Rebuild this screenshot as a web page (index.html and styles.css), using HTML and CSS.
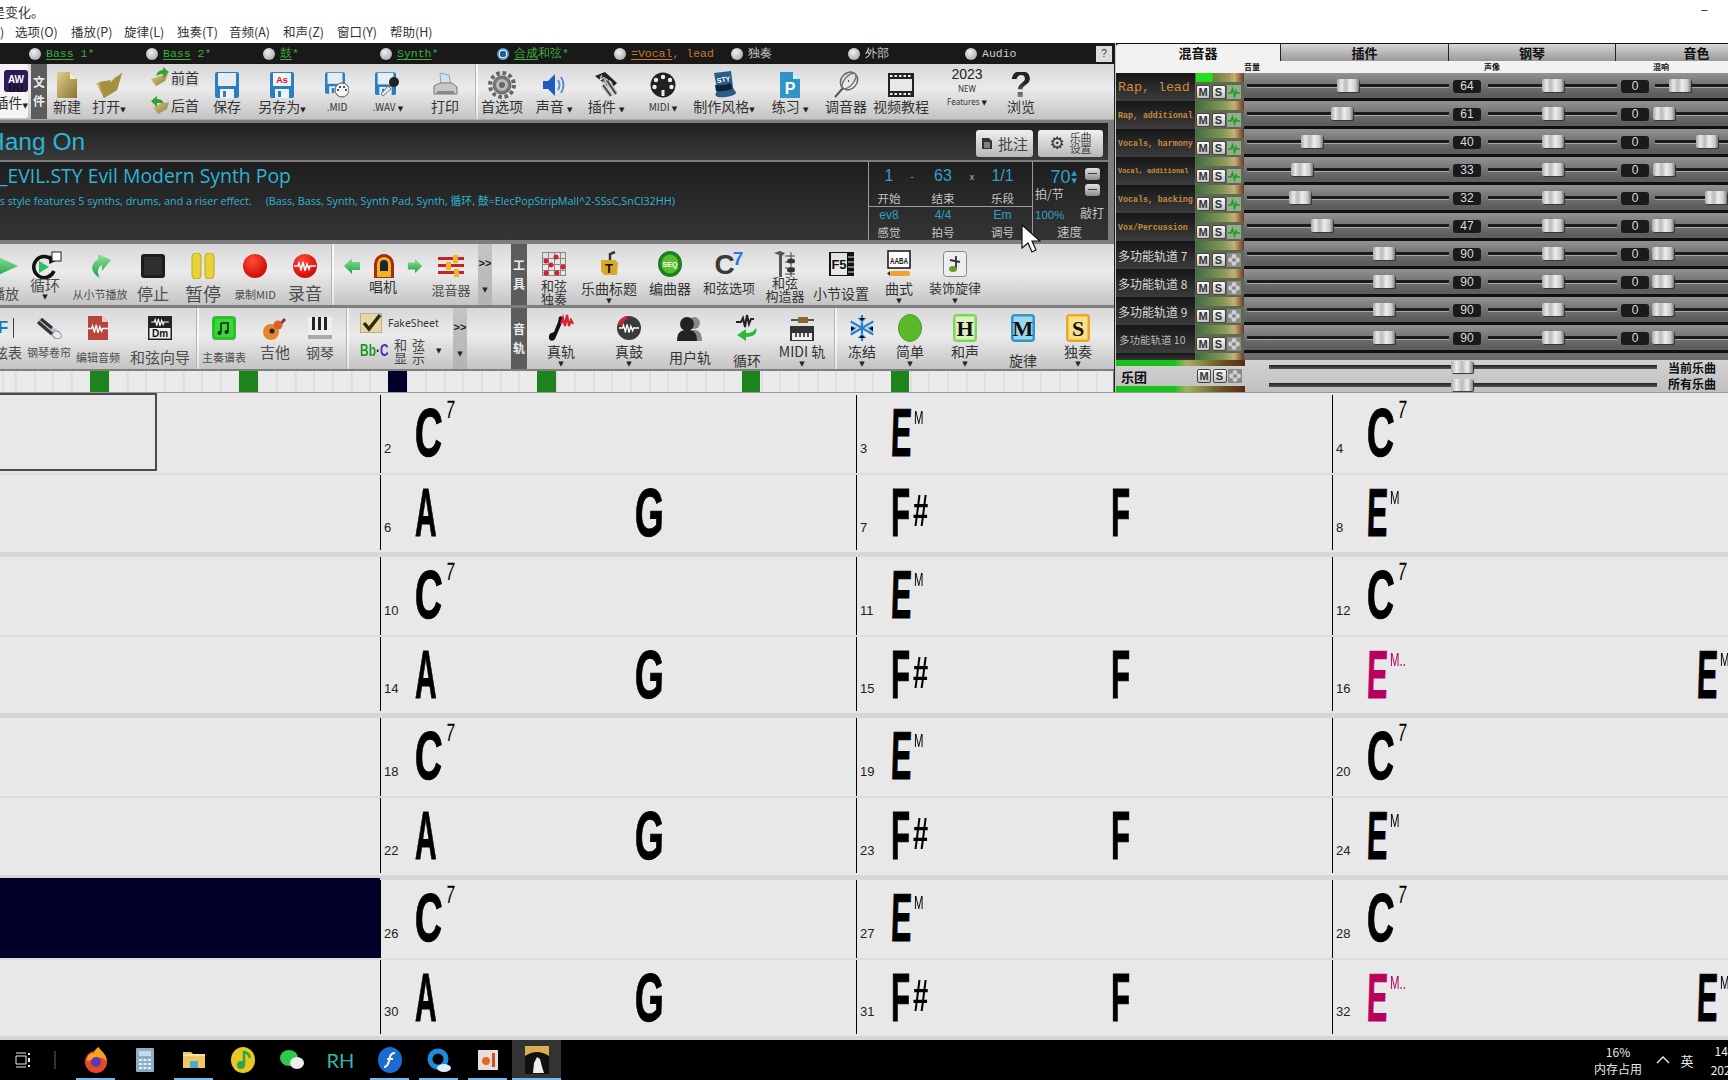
FILE: index.html
```html
<!DOCTYPE html>
<html lang="zh">
<head>
<meta charset="utf-8">
<title>Band-in-a-Box</title>
<link rel="stylesheet" href="styles.css">
</head>
<body>
<svg class="defs" width="0" height="0">
  <defs>
    <linearGradient id="gold" x1="0" y1="0" x2="1" y2="1"><stop offset="0" stop-color="#e2cf8c"/><stop offset="1" stop-color="#8a7430"/></linearGradient>
    <linearGradient id="grn" x1="0" y1="0" x2="0" y2="1"><stop offset="0" stop-color="#8fe39a"/><stop offset="1" stop-color="#1fa04a"/></linearGradient>
    <radialGradient id="red" cx=".4" cy=".3" r=".8"><stop offset="0" stop-color="#ff4a3a"/><stop offset="1" stop-color="#c80000"/></radialGradient>
    <symbol id="fl" viewBox="0 0 24 26"><rect width="24" height="26" rx="2" fill="#2a7fc4"/><rect x="3" y="1" width="18" height="13" fill="#e6ecf0"/><rect x="5" y="17" width="14" height="9" fill="#eef2f6"/><rect x="8" y="19" width="3" height="6" fill="#2a7fc4"/></symbol>
    <symbol id="gf" viewBox="0 0 14 14"><rect width="14" height="14" fill="#8a8a8a"/><g fill="#cfcfcf"><circle cx="7" cy="3.5" r="2.4"/><circle cx="7" cy="10.5" r="2.4"/><circle cx="3.5" cy="7" r="2.4"/><circle cx="10.5" cy="7" r="2.4"/></g><circle cx="7" cy="7" r="1.6" fill="#777"/></symbol>
    <symbol id="gw" viewBox="0 0 14 14"><rect width="14" height="14" fill="#9aa88e"/><path d="M1 8h3l1.5-4 2 7 1.5-5 1 2h3" fill="none" stroke="#18a028" stroke-width="1.6"/></symbol>
    <symbol id="rw" viewBox="0 0 24 10"><path d="M1 5h4l1-3 2 7 2-8 2 9 2-7 2 5 1-3h6" fill="none" stroke="#fff" stroke-width="1.5"/></symbol>
  </defs>
</svg>

<div class="app">
  <header class="top">
    <div class="note">是变化。</div>
    <div class="wctl">–</div>
    <nav class="menu"><span>)</span><span>选项(O)</span><span>播放(P)</span><span>旋律(L)</span><span>独奏(T)</span><span>音频(A)</span><span>和声(Z)</span><span>窗口(Y)</span><span>帮助(H)</span></nav>
  </header>

  <div class="work">
    <section class="left">
      <div class="tracks">
        <label class="trk grn"><i class="radio"></i><span><u>Bass</u> 1*</span></label>
        <label class="trk grn"><i class="radio"></i><span><u>Bass</u> 2*</span></label>
        <label class="trk grn"><i class="radio"></i><span><u>鼓</u>*</span></label>
        <label class="trk grn"><i class="radio"></i><span><u>Synth</u>*</span></label>
        <label class="trk grn"><i class="radio sel"></i><span><u>合成</u>和弦*</span></label>
        <label class="trk org"><i class="radio"></i><span><u>=Vocal</u>, lead</span></label>
        <label class="trk wht"><i class="radio"></i><span>独奏</span></label>
        <label class="trk wht"><i class="radio"></i><span>外部</span></label>
        <label class="trk wht"><i class="radio"></i><span>Audio</span></label>
        <button class="help">?</button>
      </div>

      <div class="bar t1">
        <div class="plug"><svg width="26" height="22" viewBox="0 0 26 22"><rect x="2" width="24" height="22" rx="3" fill="#2c1a58"/><text x="14" y="13" class="svgt w" font-size="10">AW</text><text x="14" y="22" class="svgt k" font-size="10">UU</text></svg><div class="lb f14">插件<em>▼</em></div></div>
        <span></span>
        <div class="vtab">文件</div>
        <div class="tool"><div class="ia"><svg width="22" height="28" viewBox="0 0 22 28"><path d="M1 1h13l7 7v19H1z" fill="url(#gold)"/><path d="M14 1v7h7z" fill="#f3ecd0"/></svg></div><div class="lb f14">新建</div></div>
        <div class="tool"><div class="ia"><svg width="28" height="28" viewBox="0 0 28 28"><path d="M1 12l8 15 13-8 5-17-8 5-3 4z" fill="url(#gold)"/><path d="M9 27L4 11l12-2-1 3 12-10-5 17z" fill="#a58f42"/></svg></div><div class="lb f14">打开<em>▼</em></div></div>
        <span></span>
        <div class="tool first">
          <div class="fi on"><svg width="20" height="20" viewBox="0 0 20 20"><path d="M1 12l5 7 9-5 3-7-8 2z" fill="url(#gold)"/><path d="M6 9c1-4 4-6 7-6V0l6 5-6 6V7c-3 0-5 1-7 2z" fill="#2fa52f"/></svg><span class="f14">前首</span></div>
          <div class="fi"><svg width="20" height="20" viewBox="0 0 20 20"><path d="M3 12l5 7 9-5 2-7-9 2z" fill="url(#gold)"/><path d="M14 9c-1-4-4-5-7-5V1L1 6l6 6V8c3 0 5 0 7 1z" fill="#2fa52f"/></svg><span class="f14">后首</span></div>
        </div>
        <div class="tool"><div class="ia"><svg width="24" height="26"><use href="#fl"/></svg></div><div class="lb f14">保存</div></div>
        <div class="tool"><div class="ia"><svg width="24" height="26" viewBox="0 0 24 26"><use href="#fl" width="24" height="26"/><rect x="3" y="1" width="18" height="13" fill="#f2f2f2"/><text x="12" y="11" class="svgt" font-size="9" fill="#c8102e">As</text></svg></div><div class="lb f14">另存为<em>▼</em></div></div>
        <div class="tool"><div class="ia"><svg width="24" height="26" viewBox="0 0 24 26"><use href="#fl" width="20" height="22"/><circle cx="17" cy="18" r="7" fill="#f4f4f4" stroke="#555"/><g fill="#222"><circle cx="13" cy="18" r="1"/><circle cx="15" cy="15" r="1"/><circle cx="19" cy="15" r="1"/><circle cx="21" cy="18" r="1"/></g></svg></div><div class="lb f10 up">.MID</div></div>
        <div class="tool"><div class="ia"><svg width="26" height="26" viewBox="0 0 26 26"><use href="#fl" width="21" height="23"/><path d="M6 22l7-8 3 3-8 7z" fill="#e8e8e8" stroke="#777"/><circle cx="19" cy="10" r="5" fill="#222"/></svg></div><div class="lb f10 up">.WAV <em>▼</em></div></div>
        <div class="tool"><div class="ia"><svg width="26" height="26" viewBox="0 0 26 26"><path d="M8 1l9 2 2 10H9z" fill="#cfe0ee" stroke="#8aa"/><path d="M2 14l6-3h12l5 4v7H2z" fill="#c8c8c8" stroke="#777"/><rect x="5" y="19" width="17" height="3" fill="#888"/></svg></div><div class="lb f14">打印</div></div>
        <span></span>
        <div class="sep"></div>
        <div class="tool"><div class="ia"><svg width="28" height="28" viewBox="0 0 28 28"><circle cx="14" cy="14" r="9" fill="#777" stroke="#666" stroke-width="1"/><circle cx="14" cy="14" r="12" fill="none" stroke="#666" stroke-width="4" stroke-dasharray="3.6 2.7"/><circle cx="14" cy="14" r="6" fill="#bbb"/><circle cx="14" cy="14" r="3" fill="#666"/></svg></div><div class="lb f14">首选项</div></div>
        <div class="tool"><div class="ia"><svg width="24" height="24" viewBox="0 0 24 24"><path d="M1 8h5l7-7v22l-7-7H1z" fill="#1d5fc0"/><path d="M16 7q3 5 0 10M19 4q5 8 0 16" fill="none" stroke="#5a8ed8" stroke-width="2"/></svg></div><div class="lb f14">声音 <em>▼</em></div></div>
        <div class="tool"><div class="ia"><svg width="26" height="28" viewBox="0 0 26 28"><path d="M2 5L12 1l12 11-6 6z" fill="#222"/><text x="12" y="12" class="svgt w" font-size="7" transform="rotate(35 12 10)">VST</text><path d="M10 14l8 11M15 11l8 12" stroke="#ccc" stroke-width="5"/><path d="M10 14l8 11M15 11l8 12" stroke="#444" stroke-width="2"/></svg></div><div class="lb f14">插件 <em>▼</em></div></div>
        <div class="tool"><div class="ia"><svg width="26" height="26" viewBox="0 0 26 26"><circle cx="13" cy="13" r="12.5" fill="#222"/><g fill="#eee"><circle cx="13" cy="5" r="2.2"/><circle cx="6" cy="8" r="2.2"/><circle cx="20" cy="8" r="2.2"/><circle cx="4.5" cy="15" r="2.2"/><circle cx="21.5" cy="15" r="2.2"/><rect x="11.5" y="18" width="3" height="6"/></g></svg></div><div class="lb f10 up">MIDI <em>▼</em></div></div>
        <div class="tool"><div class="ia"><svg width="26" height="28" viewBox="0 0 26 28"><path d="M3 2l17-2 2 16c1 4 3 4 3 6 0 3-17 6-20 3-2-2 1-3 1-7z" fill="#2a5c88"/><path d="M4 14q9 1 16-2l1 6q-8 3-16 2z" fill="#123"/><text x="13" y="11" class="svgt w" font-size="7" transform="rotate(-10 13 11)">STY</text></svg></div><div class="lb f14">制作风格<em>▼</em></div></div>
        <div class="tool"><div class="ia"><svg width="22" height="28" viewBox="0 0 22 28"><path d="M1 1h13l7 7v19H1z" fill="#2f95c8"/><path d="M14 1v7h7z" fill="#d8eef8"/><text x="11" y="23" class="svgt w" font-size="16">P</text></svg></div><div class="lb f14">练习 <em>▼</em></div></div>
        <div class="tool"><div class="ia"><svg width="26" height="28" viewBox="0 0 26 28"><ellipse cx="16" cy="10" rx="8" ry="9.500" fill="none" stroke="#666" stroke-width="1.500" transform="rotate(40 16 10)"/><ellipse cx="16" cy="10" rx="4.500" ry="9.500" fill="none" stroke="#777" stroke-width="1.500" transform="rotate(40 16 10)"/><path d="M16 10l-1 0M10 17L2 26" stroke="#555" stroke-width="2"/></svg></div><div class="lb f14">调音器</div></div>
        <div class="tool"><div class="ia"><svg width="26" height="24" viewBox="0 0 26 24"><rect width="26" height="24" fill="#222"/><rect x="2" y="6" width="22" height="12" fill="#e8e8e8"/><path d="M2 3h22M2 21h22" stroke="#eee" stroke-width="2" stroke-dasharray="2.5 2"/></svg></div><div class="lb f14">视频教程</div></div>
        <div class="tool feat"><div class="y23">2023</div><div class="y3">NEW</div><div class="y3">Features <em>▼</em></div></div>
        <div class="tool"><div class="ia qm">?</div><div class="lb f14">浏览</div></div>
      </div>

      <div class="title">
        <div class="song">Hang On</div>
        <div class="btns">
          <button class="pill"><svg width="12" height="13" viewBox="0 0 12 13"><path d="M1 1h7l3 3v8H1z" fill="#333"/><path d="M3 6h6M3 8h6M3 10h6" stroke="#ccc"/></svg><span>批注</span></button>
          <button class="pill wide"><span class="gear">⚙</span><span class="two">乐曲<br>设置</span></button>
        </div>
      </div>

      <div class="style">
        <div class="stxt">
          <div class="sname">_EVIL.STY Evil Modern Synth Pop</div>
          <div class="sdesc">is style features 5 synths, drums, and a riser effect.&nbsp;&nbsp;&nbsp;&nbsp;&nbsp;(Bass, Bass, Synth, Synth Pad, Synth, 循环, 鼓=ElecPopStripMall^2-SSsC,SnCl32HH)</div>
        </div>
        <div class="form">
          <div class="fr top1">
            <b class="v">1</b><small>-</small><b class="v">63</b><small>x</small><b class="v">1/1</b>
            <span>开始</span><i></i><span>结束</span><i></i><span>乐段</span>
          </div>
          <div class="fr bot1">
            <b class="v s">ev8</b><i></i><b class="v s">4/4</b><i></i><b class="v s">Em</b>
            <span>感觉</span><i></i><span>拍号</span><i></i><span>调号</span>
          </div>
        </div>
        <div class="tempo">
          <div class="tleft">
            <div class="tnum"><b class="v">70</b><span class="arr">▲<br>▼</span></div>
            <span class="tl">拍/节</span>
            <b class="v s p">100%</b>
          </div>
          <div class="tright"><em class="mini"></em><em class="mini"></em><span class="tl">敲打</span></div>
          <span class="tspd">速度</span>
        </div>
      </div>

      <div class="bar t2a">
        <div class="tool"><div class="ia"><svg width="30" height="26" viewBox="0 0 30 26"><path d="M2 1l26 12L2 25z" fill="url(#grn)"/></svg></div><div class="lb f14 dim">播放</div></div>
        <div class="tool dn"><div class="ia"><svg class="lp" width="34" height="30" viewBox="0 0 34 30"><path d="M24 9a10.5 10.5 0 1 0 2 11" fill="none" stroke="#111" stroke-width="3.5"/><path d="M22 4l-1 9 7-3z" fill="#111"/><path d="M11 10l10 6-10 6z" fill="#2fbf5f"/><rect x="24" y="1" width="9" height="9" fill="#fff" stroke="#222"/></svg></div><div class="lb f15 dim">循环</div><em>▼</em></div>
        <div class="tool"><div class="ia"><svg width="24" height="26" viewBox="0 0 24 26"><path d="M12 25C3 20 1 12 10 6V1l13 6-9 11v-6c-5 3-5 8-2 13z" fill="url(#grn)"/></svg></div><div class="lb f11 dim">从小节播放</div></div>
        <div class="tool"><div class="ia"><svg width="24" height="24"><rect width="24" height="24" rx="3" fill="#1c1c1c"/><rect x="3" y="3" width="18" height="18" fill="#2f2f2f"/></svg></div><div class="lb f16 dim">停止</div></div>
        <div class="tool"><div class="ia"><svg width="24" height="26"><rect x="1" width="9" height="26" rx="4" fill="#e8d23c" stroke="#c0a818"/><rect x="14" width="9" height="26" rx="4" fill="#e8d23c" stroke="#c0a818"/></svg></div><div class="lb f18 dim">暂停</div></div>
        <div class="tool"><div class="ia"><svg width="24" height="24"><circle cx="12" cy="12" r="12" fill="url(#red)"/></svg></div><div class="lb f11 dim">录制MID</div></div>
        <div class="tool"><div class="ia"><svg width="24" height="24" viewBox="0 0 24 24"><circle cx="12" cy="12" r="12" fill="url(#red)"/><use href="#rw" x="0" y="7" width="24" height="10"/></svg></div><div class="lb f17 dim">录音</div></div>
        <div class="sep"></div>
        <div class="tool juke">
          <div class="ia gp">
            <svg width="18" height="18" viewBox="0 0 18 18"><path d="M1 9l8-8v4h8v8H9v4z" fill="url(#grn)"/></svg>
            <svg width="22" height="26" viewBox="0 0 22 26"><path d="M1 25V11a10 10 0 0 1 20 0v14z" fill="#a82a14"/><path d="M4 24V11a7 7 0 0 1 14 0v13z" fill="#e8b828"/><path d="M7 18V11a4 4 0 0 1 8 0v7z" fill="#223"/></svg>
            <svg width="16" height="16" viewBox="0 0 18 18"><path d="M17 9L9 1v4H1v8h8v4z" fill="url(#grn)"/></svg>
          </div>
          <div class="lb f14 up4">唱机</div>
        </div>
        <div class="tool"><div class="ia"><svg width="26" height="22" viewBox="0 0 26 22"><rect y="2" width="26" height="3" fill="#c8202a"/><rect y="9" width="26" height="3" fill="#c8202a"/><rect y="16" width="26" height="3" fill="#c8202a"/><rect x="15" width="5" height="8" fill="#e8b828"/><rect x="8" y="7" width="5" height="8" fill="#e8b828"/><rect x="16" y="14" width="5" height="8" fill="#e8b828"/></svg></div><div class="lb f13 dim mx">混音器</div></div>
        <span></span>
        <div class="more"><span>&gt;&gt;</span><em>▼</em></div>
        <span></span><span></span>
        <div class="vtab">工具</div>
        <div class="tool"><div class="ia sm"><svg width="24" height="24" viewBox="0 0 24 24"><path d="M0 .5h24M0 6.500h24M0 12.500h24M0 18.500h24M0 23.500h24M.5 0v24M6.500 0v24M12.500 0v24M18.500 0v24M23.500 0v24" stroke="#888"/><g fill="#d02030"><circle cx="14" cy="5" r="2.500"/><circle cx="4" cy="9" r="2.500"/><circle cx="9" cy="13" r="2.500"/><circle cx="21" cy="15" r="2.500"/><circle cx="4" cy="21" r="2.500"/><circle cx="15" cy="21" r="2.500"/></g></svg></div><div class="lb f13 two">和弦<br>独奏</div></div>
        <div class="tool dn"><div class="ia sm"><svg width="20" height="26" viewBox="0 0 20 26"><path d="M2 9h14l3 3-1 12H5l-3-4z" fill="#d8a828"/><text x="10" y="22" class="svgt k" font-size="13">T</text><path d="M11 9V3l5-2" stroke="#333" stroke-width="2.500" fill="none"/></svg></div><div class="lb f14">乐曲标题</div><em>▼</em></div>
        <div class="tool"><div class="ia sm"><svg width="24" height="26" viewBox="0 0 24 26"><ellipse cx="12" cy="13" rx="12" ry="13" fill="#1d7f1d"/><ellipse cx="12" cy="13" rx="8.500" ry="9.500" fill="#58c030"/><text x="12" y="16" class="svgt w" font-size="7">SEQ</text></svg></div><div class="lb f14">编曲器</div></div>
        <div class="tool"><div class="ia sm c7"><b>C</b><sup>7</sup></div><div class="lb f13">和弦选项</div></div>
        <div class="tool"><div class="ia sm"><svg width="24" height="28" viewBox="0 0 24 28"><path d="M1 3l6-2 5 2-3 3v21H6V5z" fill="#555"/><path d="M12 6h10M12 12h10M12 18h10M12 24h10M18 2v25" stroke="#444"/><ellipse cx="18" cy="11" rx="4" ry="2.500" fill="#333"/><ellipse cx="18" cy="20" rx="4" ry="2.500" fill="#333"/></svg></div><div class="lb f13 two shift">和弦<br>构造器</div></div>
        <div class="tool"><div class="ia sm"><svg width="26" height="24" viewBox="0 0 26 24"><rect x="2" width="18" height="24" fill="none" stroke="#111" stroke-width="2"/><rect x="20" width="6" height="24" fill="#111"/><text x="11" y="17" class="svgt k" font-size="13">F5</text><path d="M20 5h6M20 10h6M20 15h6M20 20h6" stroke="#ddd"/></svg></div><div class="lb f14 low2">小节设置</div></div>
        <div class="tool dn"><div class="ia sm"><svg width="24" height="28" viewBox="0 0 24 28"><rect x="1" y="1" width="22" height="17" fill="#fff" stroke="#111" stroke-width="1.500"/><text x="12" y="14" class="svgt k" font-size="9" textLength="18" lengthAdjust="spacingAndGlyphs">AABA</text><rect x="3" y="21" width="20" height="5" rx="2" fill="#f0a030"/><path d="M3 21l-3 2.500 3 2.500z" fill="#333"/></svg></div><div class="lb f14">曲式</div><em>▼</em></div>
        <div class="tool dn"><div class="ia sm"><svg width="24" height="26" viewBox="0 0 24 26"><rect x=".5" y=".5" width="23" height="25" rx="3" fill="#eee" stroke="#888"/><path d="M13 5v13" stroke="#444" stroke-width="2"/><ellipse cx="10" cy="18" rx="4" ry="3" fill="#6a9a30"/><path d="M7 9l10 2" stroke="#333" stroke-width="2"/></svg></div><div class="lb f13">装饰旋律</div><em>▼</em></div>
      </div>

      <div class="bar t2b">
        <div class="tool"><div class="ia"><span class="fic">F</span></div><div class="lb f14 dim">弦表</div></div>
        <div class="tool"><div class="ia"><svg width="26" height="24" viewBox="0 0 26 24"><path d="M4 2l20 14-5 7L1 8z" fill="#b8c0c8"/><ellipse cx="21" cy="19" rx="3.500" ry="4.500" fill="#e8eef2" stroke="#889" transform="rotate(-55 21 19)"/><path d="M2 6l14 12M5 3l11 9" stroke="#333" stroke-width="3"/></svg></div><div class="lb f11 dim">钢琴卷帘</div></div>
        <div class="tool"><div class="ia"><svg width="22" height="26" viewBox="0 0 22 26"><path d="M1 1h14l6 6v18H1z" fill="#b8453c"/><path d="M15 1v6h6z" fill="#ecc"/><use href="#rw" x="0" y="9" width="22" height="9"/></svg></div><div class="lb f11 dim low">编辑音频</div></div>
        <div class="tool"><div class="ia"><svg width="24" height="24" viewBox="0 0 24 24"><rect width="24" height="24" fill="#222"/><rect x="1.500" y="12" width="21" height="10.500" fill="#eee"/><use href="#rw" x="1" y="2" width="22" height="8"/><text x="12" y="21" class="svgt k" font-size="10">Dm</text></svg></div><div class="lb f15 dim low">和弦向导</div></div>
        <span></span>
        <div class="sep"></div>
        <div class="tool"><div class="ia"><svg width="24" height="24"><rect width="24" height="24" rx="4" fill="#2cc02c"/><rect x="3" y="3" width="18" height="18" rx="2" fill="#38d838"/><path d="M9 7h7v9M9 7v9" stroke="#222" stroke-width="1.600" fill="none"/><circle cx="7.500" cy="17" r="2" fill="#222"/><circle cx="14.500" cy="16" r="2" fill="#222"/></svg></div><div class="lb f11 dim low">主奏谱表</div></div>
        <div class="tool"><div class="ia"><svg width="26" height="26" viewBox="0 0 26 26"><path d="M14 12l8-9 2 2-8 9z" fill="#8a2a4a"/><circle cx="9" cy="17" r="8" fill="#e8842a"/><circle cx="16" cy="10" r="4.500" fill="#d8642a"/><circle cx="10" cy="16" r="2.500" fill="#222"/></svg></div><div class="lb f15 dim">吉他</div></div>
        <div class="tool"><div class="ia"><svg width="24" height="22" viewBox="0 0 24 22"><rect width="24" height="22" fill="#eee"/><rect x="4" width="3" height="13" fill="#222"/><rect x="10" width="3" height="13" fill="#222"/><rect x="16" width="3" height="13" fill="#222"/><rect y="18" width="24" height="4" fill="#aaa"/></svg></div><div class="lb f14 dim">钢琴</div></div>
        <span></span>
        <div class="sep"></div>
        <div class="fake">
          <div class="frow"><svg width="22" height="20" viewBox="0 0 22 20"><rect width="22" height="20" fill="#e6d8a0" stroke="#888"/><path d="M4 10l5 6L20 2" stroke="#2a2a10" stroke-width="3.500" fill="none"/></svg><span>FakeSheet</span></div>
          <div class="frow r2"><span class="bbc"><b>Bb</b><i>·</i><u>C</u></span><span class="chdisp">和 弦<br>显 示</span><em>▼</em></div>
        </div>
        <span></span>
        <div class="more"><span>&gt;&gt;</span><em>▼</em></div>
        <span></span><span></span>
        <div class="vtab">音轨</div>
        <div class="tool dn2"><div class="ia"><svg width="26" height="28" viewBox="0 0 26 28"><path d="M11 3c5-3 4 3 2 8l-6 14c-2 3-7 2-6-3 1-4 4-3 5-4l4-10z" fill="#111"/><path d="M13 10l2-6 2 8 2-11 2 11 2-6 2 4" fill="none" stroke="#d82030" stroke-width="2.200"/></svg></div><div class="lb f14">真轨</div><em>▼</em></div>
        <div class="tool dn2"><div class="ia"><svg width="26" height="26" viewBox="0 0 26 26"><circle cx="13" cy="13" r="12" fill="#3a3a3a"/><path d="M2 9a12 12 0 0 1 8-8l2 3a9 9 0 0 0-6 7z" fill="#d82030"/><use href="#rw" x="2" y="8" width="22" height="10"/></svg></div><div class="lb f14">真鼓</div><em>▼</em></div>
        <div class="tool"><div class="ia"><svg width="26" height="26" viewBox="0 0 26 26"><circle cx="17" cy="8" r="6" fill="#888"/><path d="M10 26c0-9 3-11 7-11s8 2 8 11z" fill="#888"/><circle cx="10" cy="9" r="7" fill="#222"/><path d="M0 26c0-9 4-11 10-11s10 2 10 11z" fill="#222"/></svg></div><div class="lb f14 low">用户轨</div></div>
        <div class="tool"><div class="ia"><svg width="26" height="28" viewBox="0 0 26 28"><path d="M2 8h5l2-4 2 9 2-12 2 9 2-5h3" fill="none" stroke="#222" stroke-width="2"/><path d="M22 14c2 5-2 9-10 9v4l-9-6 9-6v4c5 0 8-2 10-5z" fill="#2fb83f"/></svg></div><div class="lb f14 low2">循环</div></div>
        <div class="tool dn2"><div class="ia"><svg width="26" height="26" viewBox="0 0 26 26"><path d="M2 5h10M18 5h7" stroke="#555" stroke-width="2"/><rect x="9" y="2" width="10" height="6" fill="#8a6a2a"/><rect x="1" y="11" width="24" height="15" fill="#333"/><path d="M3 25V18h20v7" fill="#eee"/><path d="M7 18v4M11 18v4M15 18v4M19 18v4" stroke="#222" stroke-width="1.500"/></svg></div><div class="lb f14">MIDI 轨</div><em>▼</em></div>
        <span></span>
        <div class="sep"></div>
        <div class="tool dn2"><div class="ia"><svg width="26" height="26" viewBox="0 0 26 26"><g stroke="#2a80d0" stroke-width="2.200"><path d="M13 0v26M1.700 6.500l22.600 13M1.700 19.500l22.600-13"/></g><g stroke="#60a8e8" stroke-width="1.200"><path d="M9 3l4 4 4-4M9 23l4-4 4 4M2 11l5 2-5 4M24 11l-5 2 5 4"/></g></svg></div><div class="lb f14">冻结</div><em>▼</em></div>
        <div class="tool dn2"><div class="ia"><svg width="24" height="28"><ellipse cx="12" cy="14" rx="11.500" ry="13.500" fill="#5ab82a" stroke="#4a9a20"/></svg></div><div class="lb f14">简单</div><em>▼</em></div>
        <div class="tool dn2"><div class="ia"><svg class="lt" width="24" height="28" viewBox="0 0 24 28"><rect width="24" height="28" rx="4" fill="#7ad858"/><rect x="2.500" y="2.500" width="19" height="23" fill="#dff0c0"/><text x="12" y="22" class="svgt k serif" font-size="22">H</text></svg></div><div class="lb f14">和声</div><em>▼</em></div>
        <div class="tool"><div class="ia"><svg class="lt" width="24" height="28" viewBox="0 0 24 28"><rect width="24" height="28" rx="4" fill="#2a98c8"/><rect x="2.500" y="2.500" width="19" height="23" fill="#9ad8ee"/><text x="12" y="22" class="svgt k serif" font-size="22">M</text></svg></div><div class="lb f14 low2">旋律</div></div>
        <div class="tool dn2"><div class="ia"><svg class="lt" width="24" height="28" viewBox="0 0 24 28"><rect width="24" height="28" rx="4" fill="#e8a828"/><rect x="2.500" y="2.500" width="19" height="23" fill="#f8e088"/><text x="12" y="22" class="svgt k serif" font-size="22">S</text></svg></div><div class="lb f14">独奏</div><em>▼</em></div>
      </div>

      <div class="ruler">
        <i class="mk m1"></i><i class="mk m2"></i><i class="mk nv m3"></i><i class="mk m4"></i><i class="mk m5"></i><i class="mk m6"></i>
      </div>
    </section>

    <aside class="mixer">
      <div class="tabs"><div class="tab on">混音器</div><div class="tab">插件</div><div class="tab">钢琴</div><div class="tab">音色</div></div>
      <div class="mhead"><span>音量</span><span>声像</span><span>混响</span></div>

      <div class="mrow"><div class="nm o lg">Rap, lead</div><div class="ctl"><i class="meter hot"></i><div class="ms"><b>M</b><b>S</b><svg width="14" height="14"><use href="#gw"/></svg></div></div><div class="tk"><s style="left:50%"></s></div><div class="val">64</div><div class="tk"><s style="left:50%"></s></div><div class="val">0</div><div class="tk r"><s style="left:19%"></s></div></div>
      <div class="mrow"><div class="nm o">Rap, additional</div><div class="ctl"><i class="meter"></i><div class="ms"><b>M</b><b>S</b><svg width="14" height="14"><use href="#gw"/></svg></div></div><div class="tk"><s style="left:47%"></s></div><div class="val">61</div><div class="tk"><s style="left:50%"></s></div><div class="val">0</div><div class="tk r"><s style="left:7%"></s></div></div>
      <div class="mrow"><div class="nm o">Vocals, harmony</div><div class="ctl"><i class="meter"></i><div class="ms"><b>M</b><b>S</b><svg width="14" height="14"><use href="#gw"/></svg></div></div><div class="tk"><s style="left:32%"></s></div><div class="val">40</div><div class="tk"><s style="left:50%"></s></div><div class="val">0</div><div class="tk r"><s style="left:39%"></s></div></div>
      <div class="mrow"><div class="nm o xs">Vocal, additional</div><div class="ctl"><i class="meter"></i><div class="ms"><b>M</b><b>S</b><svg width="14" height="14"><use href="#gw"/></svg></div></div><div class="tk"><s style="left:27%"></s></div><div class="val">33</div><div class="tk"><s style="left:50%"></s></div><div class="val">0</div><div class="tk r"><s style="left:7%"></s></div></div>
      <div class="mrow"><div class="nm o">Vocals, backing</div><div class="ctl"><i class="meter"></i><div class="ms"><b>M</b><b>S</b><svg width="14" height="14"><use href="#gw"/></svg></div></div><div class="tk"><s style="left:26%"></s></div><div class="val">32</div><div class="tk"><s style="left:50%"></s></div><div class="val">0</div><div class="tk r"><s style="left:46%"></s></div></div>
      <div class="mrow"><div class="nm o">Vox/Percussion</div><div class="ctl"><i class="meter"></i><div class="ms"><b>M</b><b>S</b><svg width="14" height="14"><use href="#gw"/></svg></div></div><div class="tk"><s style="left:37%"></s></div><div class="val">47</div><div class="tk"><s style="left:50%"></s></div><div class="val">0</div><div class="tk r"><s style="left:6%"></s></div></div>
      <div class="mrow"><div class="nm cn">多功能轨道 7</div><div class="ctl"><i class="meter"></i><div class="ms"><b>M</b><b>S</b><svg width="14" height="14"><use href="#gf"/></svg></div></div><div class="tk"><s style="left:68%"></s></div><div class="val">90</div><div class="tk"><s style="left:50%"></s></div><div class="val">0</div><div class="tk r"><s style="left:6%"></s></div></div>
      <div class="mrow"><div class="nm cn">多功能轨道 8</div><div class="ctl"><i class="meter"></i><div class="ms"><b>M</b><b>S</b><svg width="14" height="14"><use href="#gf"/></svg></div></div><div class="tk"><s style="left:68%"></s></div><div class="val">90</div><div class="tk"><s style="left:50%"></s></div><div class="val">0</div><div class="tk r"><s style="left:6%"></s></div></div>
      <div class="mrow"><div class="nm cn">多功能轨道 9</div><div class="ctl"><i class="meter"></i><div class="ms"><b>M</b><b>S</b><svg width="14" height="14"><use href="#gf"/></svg></div></div><div class="tk"><s style="left:68%"></s></div><div class="val">90</div><div class="tk"><s style="left:50%"></s></div><div class="val">0</div><div class="tk r"><s style="left:6%"></s></div></div>
      <div class="mrow"><div class="nm cn s11">多功能轨道 10</div><div class="ctl"><i class="meter"></i><div class="ms"><b>M</b><b>S</b><svg width="14" height="14"><use href="#gf"/></svg></div></div><div class="tk"><s style="left:68%"></s></div><div class="val">90</div><div class="tk"><s style="left:50%"></s></div><div class="val">0</div><div class="tk r"><s style="left:6%"></s></div></div>
      <div class="mstub"><div class="nm"></div><div class="ctl"><i class="meter"></i></div><div class="stubr"></div></div>

      <div class="band">
        <div class="bl">
          <i class="bm"></i>
          <div class="bmid"><b class="bn">乐团</b><div class="ms"><b>M</b><b>S</b><svg width="14" height="14"><use href="#gf"/></svg></div></div>
          <i class="bm"></i>
        </div>
        <div class="bsl">
          <div class="bt"><s></s></div>
          <div class="bt"><s></s></div>
        </div>
        <div class="btx"><b>当前乐曲</b><b>所有乐曲</b></div>
      </div>
    </aside>
  </div>

  <main class="sheet">
    <div class="row">
      <div class="cell"><div class="selbox"></div></div>
      <div class="cell bar4"><span class="no">2</span><div class="ch cc"><b>C</b><sup>7</sup></div></div>
      <div class="cell bar4"><span class="no">3</span><div class="ch ce"><b>E</b><sup>M</sup></div></div>
      <div class="cell bar4"><span class="no">4</span><div class="ch cc"><b>C</b><sup>7</sup></div></div>
    </div>
    <div class="row ev">
      <div class="cell"></div>
      <div class="cell bar4"><span class="no">6</span><div class="ch ca"><b>A</b></div><div class="ch cg"><b>G</b></div></div>
      <div class="cell bar4"><span class="no">7</span><div class="ch cf"><b>F</b><u>#</u></div><div class="ch ff"><b>F</b></div></div>
      <div class="cell bar4"><span class="no">8</span><div class="ch ce"><b>E</b><sup>M</sup></div></div>
    </div>
    <div class="row">
      <div class="cell"></div>
      <div class="cell bar4"><span class="no">10</span><div class="ch cc"><b>C</b><sup>7</sup></div></div>
      <div class="cell bar4"><span class="no">11</span><div class="ch ce"><b>E</b><sup>M</sup></div></div>
      <div class="cell bar4"><span class="no">12</span><div class="ch cc"><b>C</b><sup>7</sup></div></div>
    </div>
    <div class="row ev">
      <div class="cell"></div>
      <div class="cell bar4"><span class="no">14</span><div class="ch ca"><b>A</b></div><div class="ch cg"><b>G</b></div></div>
      <div class="cell bar4"><span class="no">15</span><div class="ch cf"><b>F</b><u>#</u></div><div class="ch ff"><b>F</b></div></div>
      <div class="cell bar4"><span class="no">16</span><div class="ch ce pink"><b>E</b><sup>M..</sup></div><span></span><div class="ch ce"><b>E</b><sup>M</sup></div></div>
    </div>
    <div class="row">
      <div class="cell"></div>
      <div class="cell bar4"><span class="no">18</span><div class="ch cc"><b>C</b><sup>7</sup></div></div>
      <div class="cell bar4"><span class="no">19</span><div class="ch ce"><b>E</b><sup>M</sup></div></div>
      <div class="cell bar4"><span class="no">20</span><div class="ch cc"><b>C</b><sup>7</sup></div></div>
    </div>
    <div class="row ev">
      <div class="cell"></div>
      <div class="cell bar4"><span class="no">22</span><div class="ch ca"><b>A</b></div><div class="ch cg"><b>G</b></div></div>
      <div class="cell bar4"><span class="no">23</span><div class="ch cf"><b>F</b><u>#</u></div><div class="ch ff"><b>F</b></div></div>
      <div class="cell bar4"><span class="no">24</span><div class="ch ce"><b>E</b><sup>M</sup></div></div>
    </div>
    <div class="row">
      <div class="cell navy"></div>
      <div class="cell bar4"><span class="no">26</span><div class="ch cc"><b>C</b><sup>7</sup></div></div>
      <div class="cell bar4"><span class="no">27</span><div class="ch ce"><b>E</b><sup>M</sup></div></div>
      <div class="cell bar4"><span class="no">28</span><div class="ch cc"><b>C</b><sup>7</sup></div></div>
    </div>
    <div class="row ev">
      <div class="cell"></div>
      <div class="cell bar4"><span class="no">30</span><div class="ch ca"><b>A</b></div><div class="ch cg"><b>G</b></div></div>
      <div class="cell bar4"><span class="no">31</span><div class="ch cf"><b>F</b><u>#</u></div><div class="ch ff"><b>F</b></div></div>
      <div class="cell bar4"><span class="no">32</span><div class="ch ce pink"><b>E</b><sup>M..</sup></div><span></span><div class="ch ce"><b>E</b><sup>M</sup></div></div>
    </div>
  </main>

  <footer class="task">
    <div class="apps">
      <div class="tv"><svg width="16" height="16" viewBox="0 0 16 16"><path d="M1 1h10M1 15h10M1 4h10v8H1z" fill="none" stroke="#eee"/><path d="M14 1v2M14 6v4M14 13v2" stroke="#eee" stroke-width="2"/></svg></div>
      <div class="tsep"><i></i></div>
      <div class="ap on"><svg width="24" height="26" viewBox="0 0 24 26"><circle cx="12" cy="15" r="11" fill="#e8482a"/><path d="M3 14C3 7 7 6 10 6c0-2 2-5 5-6 0 3 7 5 8 14-3-3-6-4-9-3z" fill="#f8a020"/><circle cx="12" cy="15" r="5" fill="#5a3ab0"/></svg></div>
      <div class="ap"><svg width="18" height="24"><rect width="18" height="24" rx="1" fill="#8ab0c8"/><rect x="3" y="3" width="12" height="5" fill="#c8d8e4"/><path d="M3 12h12M3 16h12M3 20h12" stroke="#e8f0f4" stroke-width="2" stroke-dasharray="3 1.500"/></svg></div>
      <div class="ap on"><svg width="22" height="20" viewBox="0 0 22 20"><path d="M0 2h8l2 2h12v14H0z" fill="#f0c860"/><rect x="7" y="11" width="8" height="7" fill="#48a8d8"/><rect y="4" width="22" height="2" fill="#f8e0a0"/></svg></div>
      <div class="ap"><svg width="24" height="26" viewBox="0 0 24 26"><ellipse cx="12" cy="13" rx="12" ry="13" fill="#e8c820"/><circle cx="10" cy="18" r="4" fill="#2aa84a"/><path d="M13 18V5q5 1 6 6" fill="none" stroke="#2aa84a" stroke-width="2.500"/></svg></div>
      <div class="ap"><svg width="24" height="22" viewBox="0 0 24 22"><ellipse cx="9" cy="9" rx="9" ry="8" fill="#2cc94a"/><ellipse cx="17" cy="14" rx="7" ry="6" fill="#eee"/></svg></div>
      <div class="ap rh">RH</div>
      <div class="ap on"><svg width="24" height="26" viewBox="0 0 24 26"><ellipse cx="12" cy="13" rx="12" ry="13" fill="#1c6cd0"/><path d="M17 6c-5 0-5 4-6 8s-2 6-5 6M9 12h6" fill="none" stroke="#fff" stroke-width="2"/></svg></div>
      <div class="ap on"><svg width="24" height="26" viewBox="0 0 24 26"><circle cx="11" cy="12" r="8" fill="none" stroke="#1c8ce0" stroke-width="5"/><ellipse cx="17" cy="21" rx="7" ry="4" fill="#d8eef8"/></svg></div>
      <div class="ap on"><svg width="20" height="20" viewBox="0 0 20 20"><rect width="20" height="20" fill="#e8e0d8"/><circle cx="8" cy="11" r="4" fill="#e8642a"/><rect x="14" y="3" width="3" height="14" fill="#d84a2a"/></svg></div>
      <div class="ap on act"><svg width="24" height="28" viewBox="0 0 24 28"><rect width="24" height="28" fill="#111"/><path d="M0 0h24v10Q12 2 0 10z" fill="#d8b050"/><path d="M8 27l1-10 3-6 3 2 2 8 2 6z" fill="#eee"/></svg></div>
    </div>
    <div class="tray">
      <div class="mem"><span>16%</span><span>内存占用</span></div>
      <div class="chev"><svg width="14" height="8" viewBox="0 0 14 8"><path d="M1 7l6-6 6 6" fill="none" stroke="#eee" stroke-width="1.300"/></svg></div>
      <div class="ime">英</div>
      <div class="clock"><span>14:36</span><span>2023/5/6</span></div>
    </div>
  </footer>

  <svg class="cursor" width="20" height="30" viewBox="0 0 20 30"><path d="M1 1v23l6-5 4 9 4-2-4-9h8z" fill="#fff" stroke="#111" stroke-width="1.200"/></svg>
</div>
</body>
</html>
```

FILE: styles.css
```css
*{box-sizing:border-box}
html,body{margin:0;padding:0;height:100%;overflow:hidden;background:#fff}
body{font-family:"Noto Sans CJK SC","Noto Sans",sans-serif;color:#222}
.defs{position:absolute}
em{font-style:normal}
.app{position:relative;width:1728px;height:1080px;overflow:hidden;display:flex;flex-direction:column}

/* top */
.top{height:43px;position:relative;background:#fff;padding-top:3px}
.note{font-size:13px;line-height:17px;margin-left:-8px;color:#333}
.wctl{position:absolute;top:0;right:20px;font-size:14px;line-height:16px;color:#333}
.menu{display:grid;grid-template-columns:15px 56px 53px 53px 52px 54px 54px 53px auto;font-size:12.500px;line-height:18px;color:#333;margin-top:3px}

.work{height:349px;display:grid;grid-template-columns:1114px 614px;background:#6c6c6c}
.left{display:flex;flex-direction:column;background:#7e7e7e}

/* track row */
.tracks{height:21px;background:#191919;display:grid;grid-template-columns:repeat(9,117px) 1fr;padding-left:29px;align-items:center;font-family:"Liberation Mono",monospace;font-size:11.500px}
.trk{display:flex;align-items:center;gap:5px;white-space:nowrap}
.trk u{text-underline-offset:2px}
.grn{color:#3eae3e}.org{color:#c87a30}.wht{color:#cfcfcf}
.radio{width:12px;height:12px;border-radius:50%;background:radial-gradient(circle at 40% 35%,#f0f0f0,#9a9a9a)}
.radio.sel{background:radial-gradient(circle,#2a5a90 0 3px,#e8f0f8 3.500px 4px,#5aa0d8 4.500px)}
.help{width:16px;height:16px;padding:0;border:0;background:#ddd;color:#333;font-size:10px;justify-self:end;margin-right:2px}

/* shared toolbar */
.bar{display:grid;background:linear-gradient(#d8d8d8,#ebebeb 45%,#c4c4c4);overflow:hidden}
.bar>span:empty{display:block}
.tool{display:flex;flex-direction:column;align-items:center;min-width:0;white-space:nowrap}
.ia{display:flex;align-items:center;justify-content:center;flex:none}
.lb{white-space:nowrap;color:#333;text-align:center}
.lb em,.tool>em,.more em,.frow em,.y3 em{font-family:"DejaVu Sans",sans-serif;font-size:7px;color:#222}
.tool>em{line-height:8px}
.f10{font-size:10px}.f11{font-size:11px}.f13{font-size:13px}.f14{font-size:14px}.f15{font-size:15px}.f16{font-size:16px}.f17{font-size:17px}.f18{font-size:18px}
.dim{color:#4c4c4c}
.sep{background:linear-gradient(#f4f4f4,#fafafa,#e0e0e0);box-shadow:-1px 0 0 #b4b4b4;height:100%}
.vtab{background:#5c5c5c;color:#ececec;font-size:12px;font-weight:700;writing-mode:vertical-rl;display:flex;align-items:center;justify-content:center;letter-spacing:7px;height:100%;padding-top:6px}
.more{background:linear-gradient(#c4c4c4,#b4b4b4);display:flex;flex-direction:column;align-items:center;justify-content:space-around;padding:5px 0 3px;font-size:11px;font-weight:700;color:#222;font-family:"Liberation Sans",sans-serif}
.svgt{font-family:"Liberation Sans",sans-serif;font-weight:700;text-anchor:middle}
.svgt.w{fill:#fff}.svgt.k{fill:#111}.svgt.serif{font-family:"Liberation Serif",serif}

/* toolbar 1 */
.t1{height:56px;grid-template-columns:28px 3px 16px 40px 44px 11px 68px 34px 76px 34px 68px 46px 8px 2px 48px 56px 48px 66px 56px 76px 36px 74px 58px 50px 1fr;border-bottom:1px solid #aaa}
.t1 .tool{padding-top:8px}
.t1 .ia{height:26px}
.t1 .lb{line-height:17px}
.t1 .lb.up{line-height:17px}
.plug{background:#f4f4f4;border-radius:0 3px 3px 0;margin-bottom:1px;display:flex;flex-direction:column;align-items:flex-end;padding-top:6px;overflow:hidden}
.plug svg{flex:none}
.plug .lb{line-height:18px;margin-top:1px;white-space:nowrap}
.tool.first{align-items:flex-start;padding:1px 0 0 8px!important;gap:4px}
.fi{display:flex;align-items:center;gap:1px;height:24px;line-height:20px;color:#333}
.fi.on span{background:#dcdcdc}
.feat{line-height:1;padding-top:1px!important}
.y23{font-family:"Liberation Sans",sans-serif;font-size:14px;line-height:16px;color:#222;margin-top:1px}
.y3{font-family:"Noto Sans",sans-serif;font-size:8px;line-height:13px;color:#333}
.qm{font:700 36px/26px "Liberation Sans",sans-serif;color:#333;background:linear-gradient(#222 40%,#888);-webkit-background-clip:text;background-clip:text;-webkit-text-fill-color:transparent}

/* title */
.title{height:37px;margin-top:3px;margin-right:6px;background:linear-gradient(#202020,#3a3a3a);display:flex;justify-content:space-between;align-items:center;overflow:hidden}
.song{font:24.500px/34px "Liberation Sans",sans-serif;color:#2db4d6;margin-left:-13px}
.btns{display:flex;gap:5px;padding:3px 5px 0 0}
.pill{height:27px;width:57px;border:0;border-radius:3px;background:linear-gradient(#f0f0f0,#b8b8b8);display:flex;align-items:center;justify-content:center;gap:5px;font:15px "Noto Sans CJK SC",sans-serif;color:#444;padding:0}
.pill.wide{width:65px}
.gear{font:17px "DejaVu Sans",sans-serif;color:#333}
.pill .two{font-size:11px;line-height:11px;text-align:left}

/* style */
.style{height:78px;margin-top:2px;margin-right:6px;background:linear-gradient(#1e1e1e,#343434);display:grid;grid-template-columns:868px 165px 1fr;color:#2db4d6;overflow:hidden}
.sname{font:19.400px/24px "Open Sans","Noto Sans CJK SC",sans-serif;margin:2px 0 0 -1px;white-space:nowrap}
.sdesc{font:10.800px/14px "Open Sans","Noto Sans CJK SC",sans-serif;margin-top:6px;white-space:nowrap;margin-left:-3px}
.form{border-left:1px solid #9a9a9a;border-right:1px solid #9a9a9a;display:grid;grid-template-rows:44px 1fr}
.fr{display:grid;grid-template-columns:40px 6px 56px 2px 1fr;justify-items:center;align-items:center;font-size:11.500px;color:#c4c4c4;white-space:nowrap}
.fr small{font-size:9px;color:#bbb}
.bot1{border-top:1px solid #9a9a9a}
.top1{grid-template-rows:28px 16px}
.bot1{grid-template-rows:16px 17px}
.v{font:400 16px/1 "Liberation Sans",sans-serif;color:#2aa4c4}
.v.s{font-size:12px}
.tempo{position:relative;display:grid;grid-template-columns:42px 30px;color:#c4c4c4;font-size:12px;padding-left:2px}
.tleft{display:flex;flex-direction:column;padding-top:5px}
.tnum{display:flex;justify-content:flex-end;align-items:center;gap:1px;height:20px}
.tnum .v{font-size:18px}
.arr{font:7px/8px "DejaVu Sans",sans-serif;color:#2aa4c4}
.tl{line-height:14px;white-space:nowrap}
.v.p{margin-top:9px;font-size:11.500px;color:#2aa4c4}
.tright{display:flex;flex-direction:column;align-items:center;gap:4px;padding-top:6px}
.mini{width:15px;height:12px;border-radius:3px;background:linear-gradient(#e0e0e0,#8e8e8e);position:relative}
.mini::after{content:"";display:block;margin:5px 3px 0;height:1px;background:#444}
.tright .tl{margin-top:6px}
.tspd{position:absolute;left:24px;bottom:-1px;line-height:18px;font-size:12.500px}

/* toolbars 2 */
.t2a,.t2b{height:61px}
.t2a{margin-top:4px;margin-left:-12px;grid-template-columns:34px 46px 64px 42px 58px 46px 54px 2px 98px 38px 8px 14px 17px 2px 16px 54px 56px 66px 52px 60px 52px 64px 48px 1fr}
.t2b{margin-top:3px;margin-left:-12px;grid-template-columns:40px 42px 56px 68px 3px 2px 50px 52px 38px 8px 2px 97px 7px 14px 42px 2px 16px 68px 68px 54px 60px 50px 8px 2px 50px 46px 64px 52px 58px 1fr}
.t2a .tool{padding-top:5px}
.t2a .ia{height:34px}
.t2a .lb{line-height:18px;margin-top:1px}
.t2a .ia.sm{height:30px}
.t2a .ia.sm+.lb{line-height:16px}
.t2a .dn .lb{margin-top:-7px;line-height:17px}
.t2a .ia.sm+.lb.two{line-height:13px;margin-top:0}
.t2a .ia.sm+.lb.shift{margin-top:-3px}
.t2a .lb.f11{margin-top:2px}
.t2a .lb.up4{margin-top:-6px}
.t2a .lb.mx{margin-top:-2px}
.t2a .lb.low2{margin-top:6px}
.t2a .dn .ia.sm+.lb{margin-top:0;line-height:18px}
.gp{gap:12px}
.juke{padding-top:5px}
.t2b .tool{padding-top:5px}
.t2b .ia{height:30px}
.t2b .lb{line-height:18px;margin-top:0}
.t2b .lb.low{margin-top:5px}
.t2b .lb.low2{margin-top:8px}
.t2b .dn2 .lb{line-height:17px}
.fic{font:700 17px "Liberation Sans",sans-serif;color:#1c78b0;border-right:1px solid #444;padding-right:5px;line-height:20px;margin-left:-4px}
.c7{font:700 24px/1 "Liberation Sans",sans-serif;color:#333;align-items:flex-end}
.c7 b{font-size:28px;font-weight:700;color:#3a3a3a}
.c7 sup{font-size:19px;color:#2a7ae0;line-height:1;margin-left:-2px;vertical-align:top;align-self:flex-start}
.fake{padding:5px 0 0 11px;display:flex;flex-direction:column;gap:5px}
.frow{display:flex;align-items:center;gap:6px;font:10.500px "Noto Sans",sans-serif;color:#333}
.r2{gap:10px}
.bbc{font:700 16px "Liberation Sans Narrow","Liberation Sans",sans-serif;color:#1e9a1e;transform:scaleX(.75);transform-origin:left;width:24px;white-space:nowrap}
.bbc i{color:#222;font-style:normal}.bbc u{text-decoration:none;color:#4a2ab0}
.chdisp{font:13px/13px "Noto Sans CJK SC",sans-serif;color:#444;letter-spacing:1px;white-space:nowrap}

/* ruler */
.ruler{height:21px;margin-top:2px;margin-right:1px;background-color:#eaeaea;background-image:repeating-linear-gradient(90deg,#d4d4d4 0 1px,transparent 1px 18.640px);background-position:15.400px 0;display:grid;grid-template-columns:repeat(60,18.640px);padding-left:15.400px}
.mk{background:#1d841d;grid-row:1}
.mk.nv{background:#00002a}
.m1{grid-column:5}.m2{grid-column:13}.m3{grid-column:21}.m4{grid-column:29}.m5{grid-column:40}.m6{grid-column:48}

/* mixer */
.mixer{background:#c8c8c8;display:flex;flex-direction:column;padding-left:1px;border-left:1px solid #222;overflow:hidden}
.tabs{height:18px;display:grid;grid-template-columns:165px 168px 167px 162px;background:#111;padding-top:1px}
.tab{background:linear-gradient(#d8d8d8,#989898);border-right:1px solid #222;text-align:center;font-size:13px;line-height:17px;font-weight:700;color:#111}
.tab.on{background:#f2f2f2;border-radius:3px 0 0 0}
.mhead{height:12px;background:#f2f2f2;display:flex;font-size:8px;line-height:12px;font-weight:700;color:#111;padding-left:128px;gap:224px}
.mhead span:last-child{margin-left:-71px}
.mrow{height:28px;display:grid;grid-template-columns:79px 49px 207px 34px 134px 34px 1fr;background:linear-gradient(#929292,#5e5e5e 85%);border-bottom:3px solid #111;position:relative}
.nm{background:linear-gradient(#161616,#3c3c3c);display:flex;align-items:center;white-space:nowrap;padding-left:2px;overflow:hidden;margin-bottom:-3px}
.nm.o{font:700 8.300px "Liberation Mono",monospace;color:#c88a3c}
.nm.lg{font:400 13.300px "Liberation Mono",monospace;color:#d08a3e}
.nm.xs{font-size:6.900px}
.nm.cn{font-size:12px;color:#d8d8d8}
.nm.s11{font-size:10.500px;padding-left:3px;color:#bbb}
.ctl{background:#5e6a50;display:flex;flex-direction:column;margin-bottom:-3px}
.meter{display:block;height:9px;margin-left:1px;background:linear-gradient(90deg,#3e6e3e,#8a9a5a 60%,#c8b078 80%,#6a3a28)}
.meter.hot{background:linear-gradient(90deg,#20e020 0 34%,#68803a 35%,#a09a60 70%,#c8b078 80%,#6a3a28)}
.ms{display:grid;grid-template-columns:14px 14px 14px;column-gap:1.500px;padding:3px 0 0 1px}
.ms b{height:14px;background:linear-gradient(#fafafa,#c0c0c0);border:1px solid #444;border-radius:2px;font:700 11px/12px "Liberation Sans",sans-serif;color:#333;text-align:center}
.tk{position:relative;margin:11px 2px 0 3px;height:3px;background:#1c1c1c;box-shadow:0 1px 0 #aaa}
.tk.r{margin-right:-60px;margin-left:2px}
.tk s{position:absolute;top:-5px;width:22px;height:13px;margin-left:-11px;background:linear-gradient(90deg,#aaa,#e8e8e8 20%,#bbb 40%,#eee 60%,#c8c8c8 85%,#777);border-radius:2px;box-shadow:1px 1px 1px #333}
.val{margin:7px 4px 0 2px;height:13px;background:#1a1a1a;border-radius:3px;color:#ddd;font:12px/13px "Liberation Sans",sans-serif;text-align:center}
.mstub{height:7px;display:grid;grid-template-columns:79px 49px 1fr;overflow:hidden}
.mstub .nm{margin:0}.mstub .ctl{margin:0}.stubr{background:#6e6e6e}
.band{height:32px;display:grid;grid-template-columns:129px 415px 1fr;background:linear-gradient(#d2d2d2,#c0c0c0)}
.bl{display:flex;flex-direction:column;justify-content:space-between}
.bm{height:6px;background:linear-gradient(90deg,#18c018 0 45%,#a8b060 55%,#6a5a28 80%,#5a2a18)}
.bmid{display:flex;justify-content:space-between;align-items:center;padding:0 3px 0 5px}
.bn{font-size:13px;color:#111}
.bmid .ms{padding:0}
.bsl{display:flex;flex-direction:column;justify-content:space-between;padding:5px 0 5px 24px;height:32px}
.bt{position:relative;height:4px;width:388px;background:linear-gradient(#222,#555)}
.bt s{position:absolute;left:193px;margin-left:-11px;top:-4px;height:12px;width:22px;background:linear-gradient(90deg,#aaa,#eee 25%,#bbb 50%,#eee 75%,#888);border-radius:2px;box-shadow:1px 1px 1px #333}
.btx{display:flex;flex-direction:column;font-size:12px;line-height:16px;color:#111;white-space:nowrap;padding-left:8px}

/* sheet */
.sheet{height:648px;background:#e8e8e8;border-top:1px solid #999;padding-top:2px;margin-left:-96px;width:1904px;overflow:hidden}
.row{height:80px;display:grid;grid-template-columns:repeat(4,476px);border-bottom:2px solid #dcdcdc}
.row.ev{height:81.500px;border-bottom:5px solid #d6d6d6;padding-bottom:2px}
.cell{position:relative;height:100%;min-height:0}
.bar4{border-left:1px solid #000;display:grid;grid-template-columns:34px 220px 110px 1fr;align-items:start;min-height:0}
.no{align-self:end;font:13px/16px "Liberation Sans",sans-serif;color:#222;padding:0 0 16px 3px}
.ev .no{padding-bottom:14px}
.selbox{width:253px;height:78px;margin-top:-2px;border:2px solid #4a4a4a;background:none}
.navy{background:#00002a;margin-top:-2px;height:80px}
.ch{display:flex;align-items:flex-start;color:#000;height:60px;padding-top:12px;font-family:"Liberation Sans",sans-serif}
.ch b{display:inline-block;font:700 68px/50px "Liberation Sans",sans-serif;-webkit-text-stroke:1px currentColor;transform-origin:left center;transform:scaleX(.56) skewX(-4deg)}
.cc b{width:29px}
.ce b{width:21px;transform:scaleX(.46) skewX(-4deg)}
.ca b{width:26px;transform:scaleX(.44)}
.cg b{width:30px;transform:scaleX(.55) skewX(-4deg)}
.cf b,.ff b{width:21px;transform:scaleX(.46)}
.ch sup{font:400 25px/24px "Liberation Sans",sans-serif;margin:-10px 0 0 2px;transform:scaleX(.62) skewX(-8deg);transform-origin:left}
.ce sup{font-size:19px;margin:2px 0 0 2px;line-height:18px;transform:scaleX(.6)}
.ch u{font:700 44px/48px "Liberation Sans",sans-serif;text-decoration:none;transform:scaleX(.62);transform-origin:left;margin-left:1px}
.pink,.pink b,.pink sup{color:#b8005e}

/* taskbar */
.task{height:40px;flex:none;background:#000;display:flex;justify-content:space-between;color:#eee}
.apps{display:grid;grid-template-columns:46px 25px repeat(10,49px);align-items:center;height:40px}
.tv{display:flex;justify-content:center}
.tsep i{display:block;width:2px;height:18px;margin-left:8px;background:#333}
.ap{height:40px;display:flex;align-items:center;justify-content:center;position:relative}
.ap.on::after{content:"";position:absolute;left:5px;right:5px;bottom:0;height:2px;background:#76b9ed}
.ap.act{background:#333}
.ap.act::after{left:0;right:0}
.rh{font:400 20px "Lato","Liberation Sans",sans-serif;color:#32b8a8}
.tray{display:grid;grid-template-columns:60px 30px 18px 64px;margin-right:-32px;font-size:12px;align-items:center}
.mem{display:flex;flex-direction:column;align-items:center;line-height:17px;font-size:12px;color:#e8e8e8}
.chev{display:flex;justify-content:center}
.ime{text-align:center;font-size:13px}
.clock{display:flex;flex-direction:column;align-items:flex-end;line-height:19px;font-size:12px;white-space:nowrap;padding-left:3px}
.clock span:first-child{align-self:center}

.cursor{position:absolute;left:1021px;top:224px}
```
